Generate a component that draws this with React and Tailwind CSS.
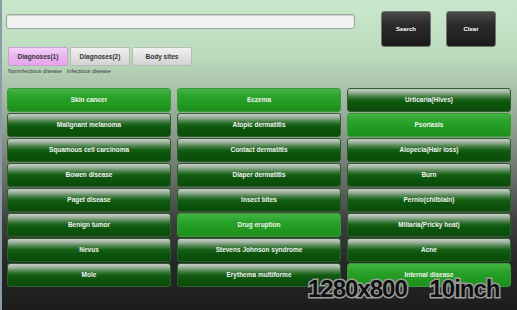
import React from 'react';

const COLUMNS = [
  [
    { label: 'Skin cancer', on: true },
    { label: 'Malignant melanoma' },
    { label: 'Squamous cell carcinoma' },
    { label: 'Bowen disease' },
    { label: 'Paget disease' },
    { label: 'Benign tumor' },
    { label: 'Nevus' },
    { label: 'Mole' },
  ],
  [
    { label: 'Eczema', on: true },
    { label: 'Atopic dermatitis' },
    { label: 'Contact dermatitis' },
    { label: 'Diaper dermatitis' },
    { label: 'Insect bites' },
    { label: 'Drug eruption', on: true },
    { label: 'Stevens Johnson syndrome' },
    { label: 'Erythema multiforme' },
  ],
  [
    { label: 'Urticaria(Hives)' },
    { label: 'Psoriasis', on: true },
    { label: 'Alopecia(Hair loss)' },
    { label: 'Burn' },
    { label: 'Pernio(chilblain)' },
    { label: 'Miliaria(Pricky heat)' },
    { label: 'Acne' },
    { label: 'Internal disease', on: true },
  ],
];

const TABS = [
  { label: 'Diagnoses(1)', active: true },
  { label: 'Diagnoses(2)' },
  { label: 'Body sites' },
];

// grid is filled row by row, so interleave the columns
const cells = [];
for (let r = 0; r < 8; r++) {
  for (let c = 0; c < 3; c++) cells.push(COLUMNS[c][r]);
}

const DiseaseButton = ({ label, on }) => (
  <button
    className={`h-[24px] w-full rounded-[3px] border text-[6.5px] font-bold text-[#f2f2f2] leading-none ${
      on
        ? 'border-[#3a9a3a] bg-[linear-gradient(to_bottom,#44b444_0%,#2aa32a_35%,#21981f_70%,#1c8e1c_100%)]'
        : 'border-[#2e5e2e] bg-[linear-gradient(to_bottom,#c6cec6_0%,#9fb29f_15%,#4f854f_32%,#135f13_50%,#0c530c_70%,#0b4c0b_100%)]'
    }`}
  >
    {label}
  </button>
);

const App = () => {
  return (
    <div
      className="relative w-[517px] h-[310px] overflow-hidden border-l-2 border-[#8b9ca6] bg-[linear-gradient(to_bottom,#cae8cc_0%,#bcdbbd_18%,#a6bea7_30%,#8f9d90_42%,#676d68_58%,#3c3e3d_72%,#262727_85%,#1d1d1d_100%)] font-['Liberation_Sans',Arial,sans-serif]"
    >
      {/* Header: search box + buttons */}
      <div className="flex h-[47px] pt-[11px]">
        <div className="pl-[4px] pt-[3px]">
          <div className="w-[349px] h-[15px] rounded-[3px] border border-[#9aa49a] bg-[#f3f3f3] shadow-[inset_0_1px_1px_rgba(0,0,0,0.15)]" />
        </div>
        <div className="ml-[26px] flex gap-[15px]">
          <button className="w-[50px] h-[36px] rounded-[3px] border border-[#6d756d] bg-[linear-gradient(to_bottom,#4a4a4a_0%,#2c2c2c_35%,#1b1b1b_100%)] text-[6px] font-bold text-white">
            Search
          </button>
          <button className="w-[50px] h-[36px] rounded-[3px] border border-[#6d756d] bg-[linear-gradient(to_bottom,#4a4a4a_0%,#2c2c2c_35%,#1b1b1b_100%)] text-[6px] font-bold text-white">
            Clear
          </button>
        </div>
      </div>

      {/* Tabs */}
      <div className="flex gap-[2px] pl-[6px]">
        {TABS.map((t) => (
          <div
            key={t.label}
            className={`w-[60px] h-[19px] flex items-center justify-center rounded-[2px] border text-[6.5px] font-bold text-[#333] ${
              t.active
                ? 'border-[#c9a0cf] bg-[linear-gradient(to_bottom,#f4d2f7_0%,#eab6f0_45%,#e4a4ec_100%)]'
                : 'border-[#b6bcb6] bg-[linear-gradient(to_bottom,#f0f0f0_0%,#e2e2e2_50%,#d2d2d2_100%)]'
            }`}
          >
            {t.label}
          </div>
        ))}
      </div>

      <div className="h-[22px] pl-[6px] pt-[3px] text-[5.5px] leading-none text-[#3a3a3a] flex gap-[5px]">
        <span>Noninfectious disease</span>
        <span>Infectious disease</span>
      </div>

      {/* Disease grid */}
      <div className="grid grid-cols-[164px_164px_164px] auto-rows-[24px] gap-x-[6px] gap-y-[1px] pl-[5px]">
        {cells.map((c) => (
          <DiseaseButton key={c.label} label={c.label} on={c.on} />
        ))}
      </div>

      {/* Device size overlay */}
      <div className="absolute left-[306px] top-[277px] whitespace-pre text-[24px] leading-none font-bold tracking-[-1px] text-[#101010] [-webkit-text-stroke:3px_#9c9c9c] [paint-order:stroke_fill]">
        {'1280x800    10inch'}
      </div>
    </div>
  );
};

export default App;
